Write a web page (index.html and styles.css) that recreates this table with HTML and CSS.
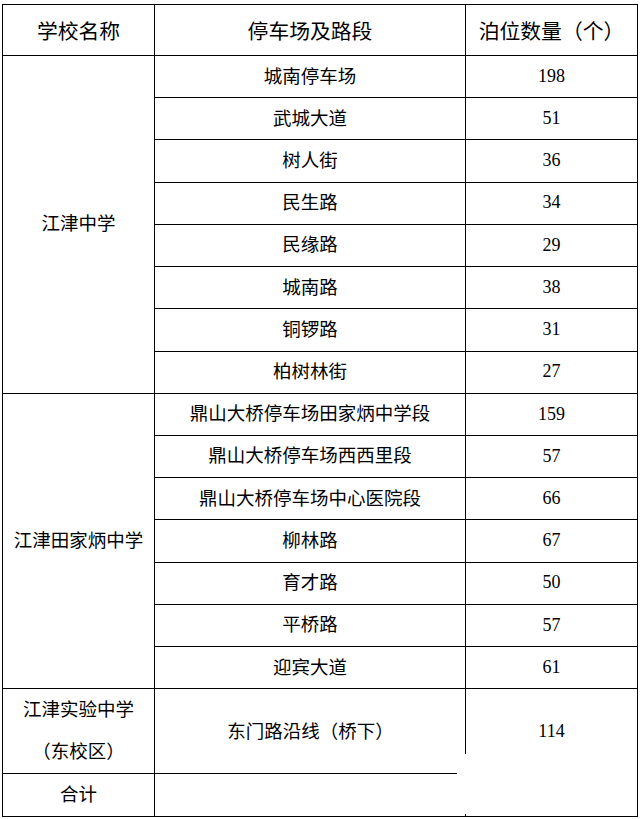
FILE: index.html
```html
<!DOCTYPE html>
<html lang="zh-CN">
<head>
<meta charset="utf-8">
<title>停车场泊位表</title>
<link rel="stylesheet" href="styles.css">
</head>
<body>
<table class="park-table">
  <colgroup>
    <col class="col-school">
    <col class="col-lot">
    <col class="col-count">
  </colgroup>
  <thead>
    <tr class="head-row">
      <th>学校名称</th>
      <th>停车场及路段</th>
      <th>泊位数量（个）</th>
    </tr>
  </thead>
  <tbody>
    <tr><td rowspan="8" class="school">江津中学</td><td>城南停车场</td><td class="num">198</td></tr>
    <tr><td>武城大道</td><td class="num">51</td></tr>
    <tr><td>树人街</td><td class="num">36</td></tr>
    <tr><td>民生路</td><td class="num">34</td></tr>
    <tr><td>民缘路</td><td class="num">29</td></tr>
    <tr><td>城南路</td><td class="num">38</td></tr>
    <tr><td>铜锣路</td><td class="num">31</td></tr>
    <tr><td>柏树林街</td><td class="num">27</td></tr>
    <tr><td rowspan="7" class="school">江津田家炳中学</td><td>鼎山大桥停车场田家炳中学段</td><td class="num">159</td></tr>
    <tr><td>鼎山大桥停车场西西里段</td><td class="num">57</td></tr>
    <tr><td>鼎山大桥停车场中心医院段</td><td class="num">66</td></tr>
    <tr><td>柳林路</td><td class="num">67</td></tr>
    <tr><td>育才路</td><td class="num">50</td></tr>
    <tr><td>平桥路</td><td class="num">57</td></tr>
    <tr><td>迎宾大道</td><td class="num">61</td></tr>
    <tr class="row-short"><td rowspan="2" class="school two-line">江津实验中学<br>（东校区）</td><td rowspan="2" class="broken-cell">东门路沿线（桥下）</td><td rowspan="3" class="num tail-num">114</td></tr>
    <tr class="row-short"></tr>
    <tr><td class="school">合计</td><td class="stub-cell"></td></tr>
  </tbody>
</table>
</body>
</html>
```

FILE: styles.css
```css
html, body {
  margin: 0;
  padding: 0;
  background: #fff;
}

.park-table {
  margin: 4px 0 0 2px;
  width: 636px;
  table-layout: fixed;
  border-collapse: separate;
  border-spacing: 0;
  border-top: 1px solid #000;
  border-left: 1px solid #000;
  color: #000;
  font-family: "Liberation Serif", "Noto Sans CJK SC", serif;
  font-size: 18.5px;
}

.col-school { width: 152px; }
.col-lot { width: 311px; }
.col-count { width: 172px; }

.park-table th,
.park-table td {
  padding: 0;
  text-align: center;
  vertical-align: middle;
  border-right: 1px solid #000;
  border-bottom: 1px solid #000;
  line-height: 1.2;
}

.park-table th {
  font-family: "Noto Sans CJK SC", sans-serif;
  font-weight: 400;
  font-size: 20.8px;
}

.head-row { height: 51px; }

.park-table tbody tr { height: 42.22px; }

.num {
  font-size: 18px;
}

.two-line {
  line-height: 42px !important;
}

.broken-cell {
  border-right: none !important;
  border-bottom: none !important;
  background-image:
    linear-gradient(#000, #000),
    linear-gradient(#000, #000);
  background-repeat: no-repeat;
  background-size: calc(100% - 9px) 1px, 1px calc(100% - 20px);
  background-position: left bottom, right top;
}

.tail-num {
  vertical-align: top !important;
  padding-top: 32px !important;
}

.stub-cell {
  border-right: none !important;
  background-image: linear-gradient(#000, #000);
  background-repeat: no-repeat;
  background-size: 1px 2px;
  background-position: right bottom;
}
```
